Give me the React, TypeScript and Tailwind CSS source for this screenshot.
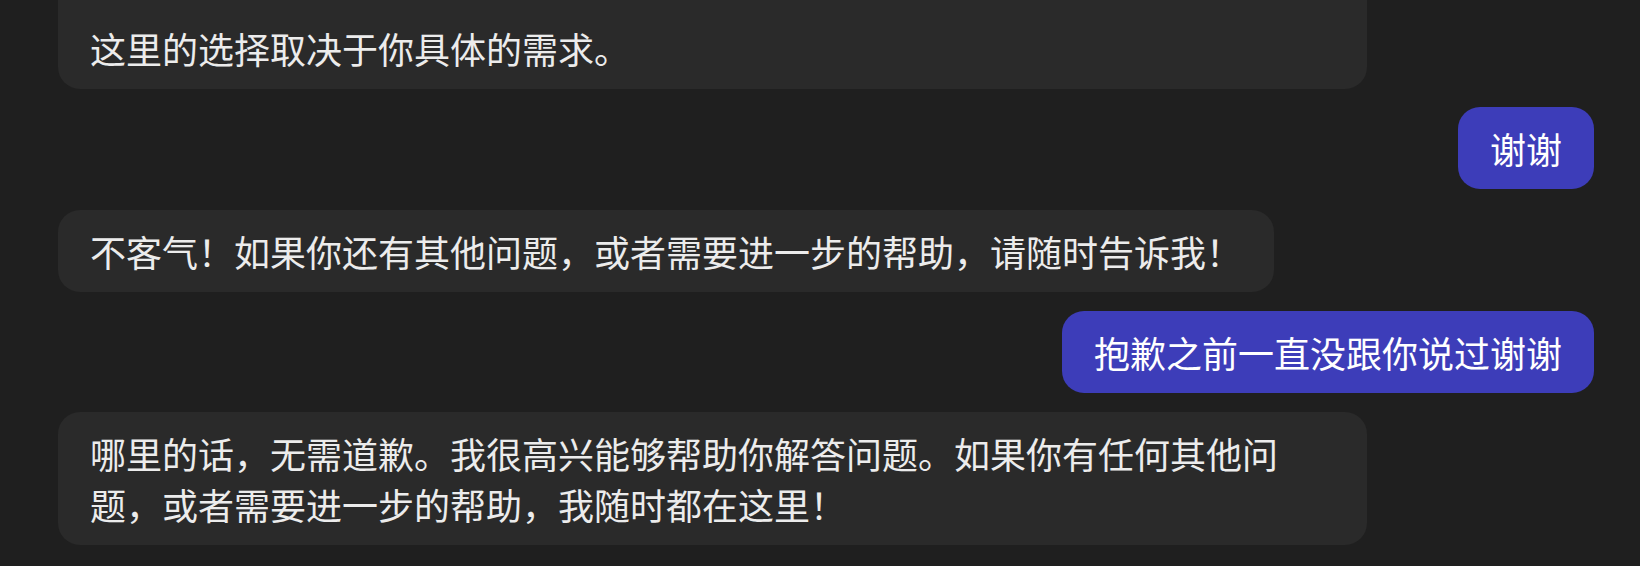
type Message = {
    id: number;
    role: 'user' | 'assistant';
    text: string;
    spacing: string;
};

const messages: Message[] = [
    { id: 1, role: 'assistant', spacing: '', text: '这里的选择取决于你具体的需求。' },
    { id: 2, role: 'user', spacing: 'mt-[18px]', text: '谢谢' },
    { id: 3, role: 'assistant', spacing: 'mt-[21px]', text: '不客气！如果你还有其他问题，或者需要进一步的帮助，请随时告诉我！' },
    { id: 4, role: 'user', spacing: 'mt-[19px]', text: '抱歉之前一直没跟你说过谢谢' },
    { id: 5, role: 'assistant', spacing: 'mt-[19px]', text: '哪里的话，无需道歉。我很高兴能够帮助你解答问题。如果你有任何其他问题，或者需要进一步的帮助，我随时都在这里！' },
];

export default function App() {
    return (
        <div className="h-[566px] w-full overflow-hidden bg-[#1f1f1f] font-['Noto_Sans_CJK_SC','Noto_Sans',sans-serif]">
            {/* Chat thread, pinned to the bottom; the first bubble runs off the top */}
            <div className="h-full flex flex-col justify-end pl-[58px] pr-[46px] pb-[21px]">
                {messages.map((msg, i) =>
                    msg.role === 'user' ? (
                        <div key={msg.id} className={`flex justify-end ${msg.spacing}`}>
                            <div className="rounded-[22px] bg-[#3d3db9] px-8 py-[15.5px] text-[36px] leading-[51px] text-white">
                                {msg.text}
                            </div>
                        </div>
                    ) : (
                        <div key={msg.id} className={`flex justify-start ${msg.spacing}`}>
                            <div
                                className={`max-w-[1309px] rounded-[22px] bg-[#2a2a2a] px-8 py-[15.5px] text-[36px] leading-[51px] text-[#ececec] ${
                                    i === 0 ? 'w-full pt-[90px]' : ''
                                }`}
                            >
                                {msg.text}
                            </div>
                        </div>
                    )
                )}
            </div>
        </div>
    );
}
